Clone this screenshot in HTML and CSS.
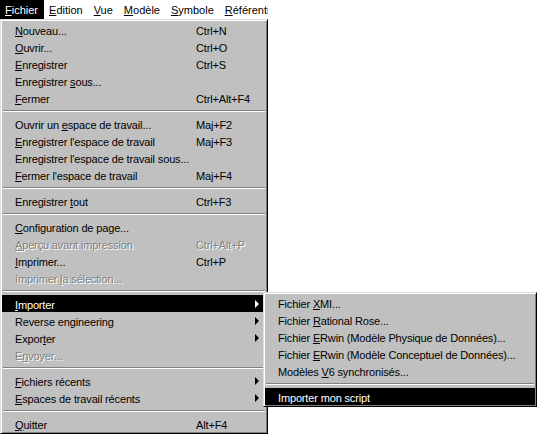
FILE: index.html
```html
<!DOCTYPE html>
<html lang="fr">
<head>
    <meta charset="UTF-8">
    <title>Fichier - Importer</title>
    <link rel="stylesheet" href="styles.css">
</head>
<body>

<div class="menubar">
    <span class="top active"><u>F</u>ichier</span>
    <span class="top"><u>E</u>dition</span>
    <span class="top"><u>V</u>ue</span>
    <span class="top"><u>M</u>odèle</span>
    <span class="top"><u>S</u>ymbole</span>
    <span class="top"><u>R</u>éférentiel</span>
</div>

<div class="menu main">
    <div class="item"><span><u>N</u>ouveau...</span><span>Ctrl+N</span></div>
    <div class="item"><span><u>O</u>uvrir...</span><span>Ctrl+O</span></div>
    <div class="item"><span><u>E</u>nregistrer</span><span>Ctrl+S</span></div>
    <div class="item"><span>Enregistrer <u>s</u>ous...</span><span></span></div>
    <div class="item"><span><u>F</u>ermer</span><span>Ctrl+Alt+F4</span></div>
    <div class="sep"></div>
    <div class="item"><span>Ouvrir un <u>e</u>space de travail...</span><span>Maj+F2</span></div>
    <div class="item"><span><u>E</u>nregistrer l'espace de travail</span><span>Maj+F3</span></div>
    <div class="item"><span>Enregistrer l'espace de travail sous...</span><span></span></div>
    <div class="item"><span><u>F</u>ermer l'espace de travail</span><span>Maj+F4</span></div>
    <div class="sep"></div>
    <div class="item"><span>Enregistrer <u>t</u>out</span><span>Ctrl+F3</span></div>
    <div class="sep"></div>
    <div class="item"><span><u>C</u>onfiguration de page...</span><span></span></div>
    <div class="item disabled"><span><u>A</u>perçu avant impression</span><span>Ctrl+Alt+P</span></div>
    <div class="item"><span><u>I</u>mprimer...</span><span>Ctrl+P</span></div>
    <div class="item disabled"><span>Imprimer <u>l</u>a sélection...</span><span></span></div>
    <div class="sep"></div>
    <div class="item selected"><span><u>I</u>mporter</span><span></span><span class="arrow"></span>
        <!-- submenu opened from Importer -->
        <div class="menu sub">
            <div class="item"><span>Fichier <u>X</u>MI...</span></div>
            <div class="item"><span>Fichier <u>R</u>ational Rose...</span></div>
            <div class="item"><span>Fichier <u>E</u>Rwin (Modèle Physique de Données)...</span></div>
            <div class="item"><span>Fichier <u>E</u>Rwin (Modèle Conceptuel de Données)...</span></div>
            <div class="item"><span>Modèles <u>V</u>6 synchronisés...</span></div>
            <div class="sep"></div>
            <div class="item selected"><span>Importer mon script</span></div>
        </div>
    </div>
    <div class="item"><span>Reverse engineering</span><span></span><span class="arrow"></span></div>
    <div class="item"><span>Expor<u>t</u>er</span><span></span><span class="arrow"></span></div>
    <div class="item disabled"><span>E<u>n</u>voyer...</span><span></span></div>
    <div class="sep"></div>
    <div class="item"><span><u>F</u>ichiers récents</span><span></span><span class="arrow"></span></div>
    <div class="item"><span><u>E</u>spaces de travail récents</span><span></span><span class="arrow"></span></div>
    <div class="sep"></div>
    <div class="item"><span><u>Q</u>uitter</span><span>Alt+F4</span></div>
</div>

</body>
</html>
```

FILE: styles.css
```css
/* Global Styles */
body {
    margin: 0;
    background: #fff;
    font-family: 'Liberation Sans', Arial, sans-serif;
    font-size: 11px;
    color: #000;
}

u {
    text-decoration: underline;
    text-underline-offset: 1px;
}

/* Menu bar */
.menubar {
    width: 268px;
    height: 19px;
    display: flex;
    align-items: stretch;
    overflow: hidden;
    white-space: nowrap;
    background: #fff;
}

.top {
    padding: 0 6px 0 5px;
    line-height: 20px;
}

.top.active {
    background: #000;
    color: #fff;
}

/* Menus */
.menu {
    background: #c0c0c0;
    box-sizing: border-box;
    border: 1px solid;
    border-color: #dfdfdf #000 #000 #dfdfdf;
    box-shadow: inset 1px 1px #fff, inset -1px -1px #808080;
    padding: 1px;
}

.main {
    width: 268px;
}

.item {
    height: 17px;
    box-sizing: border-box;
    padding-top: 3px;
    display: grid;
    grid-template-columns: 181px 1fr auto;
    align-items: center;
    padding-left: 13px;
    white-space: nowrap;
    letter-spacing: -0.15px;
    position: relative;
}

.item.selected {
    background: #000;
    color: #fff;
}

.item.disabled {
    color: #808080;
    text-shadow: 1px 1px 0 #fff;
}

.arrow {
    width: 0;
    height: 0;
    border-left: 4px solid #000;
    border-top: 4px solid transparent;
    border-bottom: 4px solid transparent;
    margin-right: 7px;
    margin-top: -2px;
}

.selected > .arrow {
    border-left-color: #fff;
}

.sep {
    height: 9px;
    display: flex;
    align-items: center;
    padding: 0 1px;
}

.sep::before {
    content: "";
    flex: 1;
    border-top: 1px solid #808080;
    border-bottom: 1px solid #fff;
}

/* Submenu */
.sub {
    position: absolute;
    left: 261px;
    top: -3px;
    width: 274px;
    color: #000;
    letter-spacing: 0;
    z-index: 10;
}

.sub .item {
    grid-template-columns: 1fr;
    padding-top: 0;
    align-items: center;
}

.sub .item span {
    position: relative;
    top: 1px;
}
```
